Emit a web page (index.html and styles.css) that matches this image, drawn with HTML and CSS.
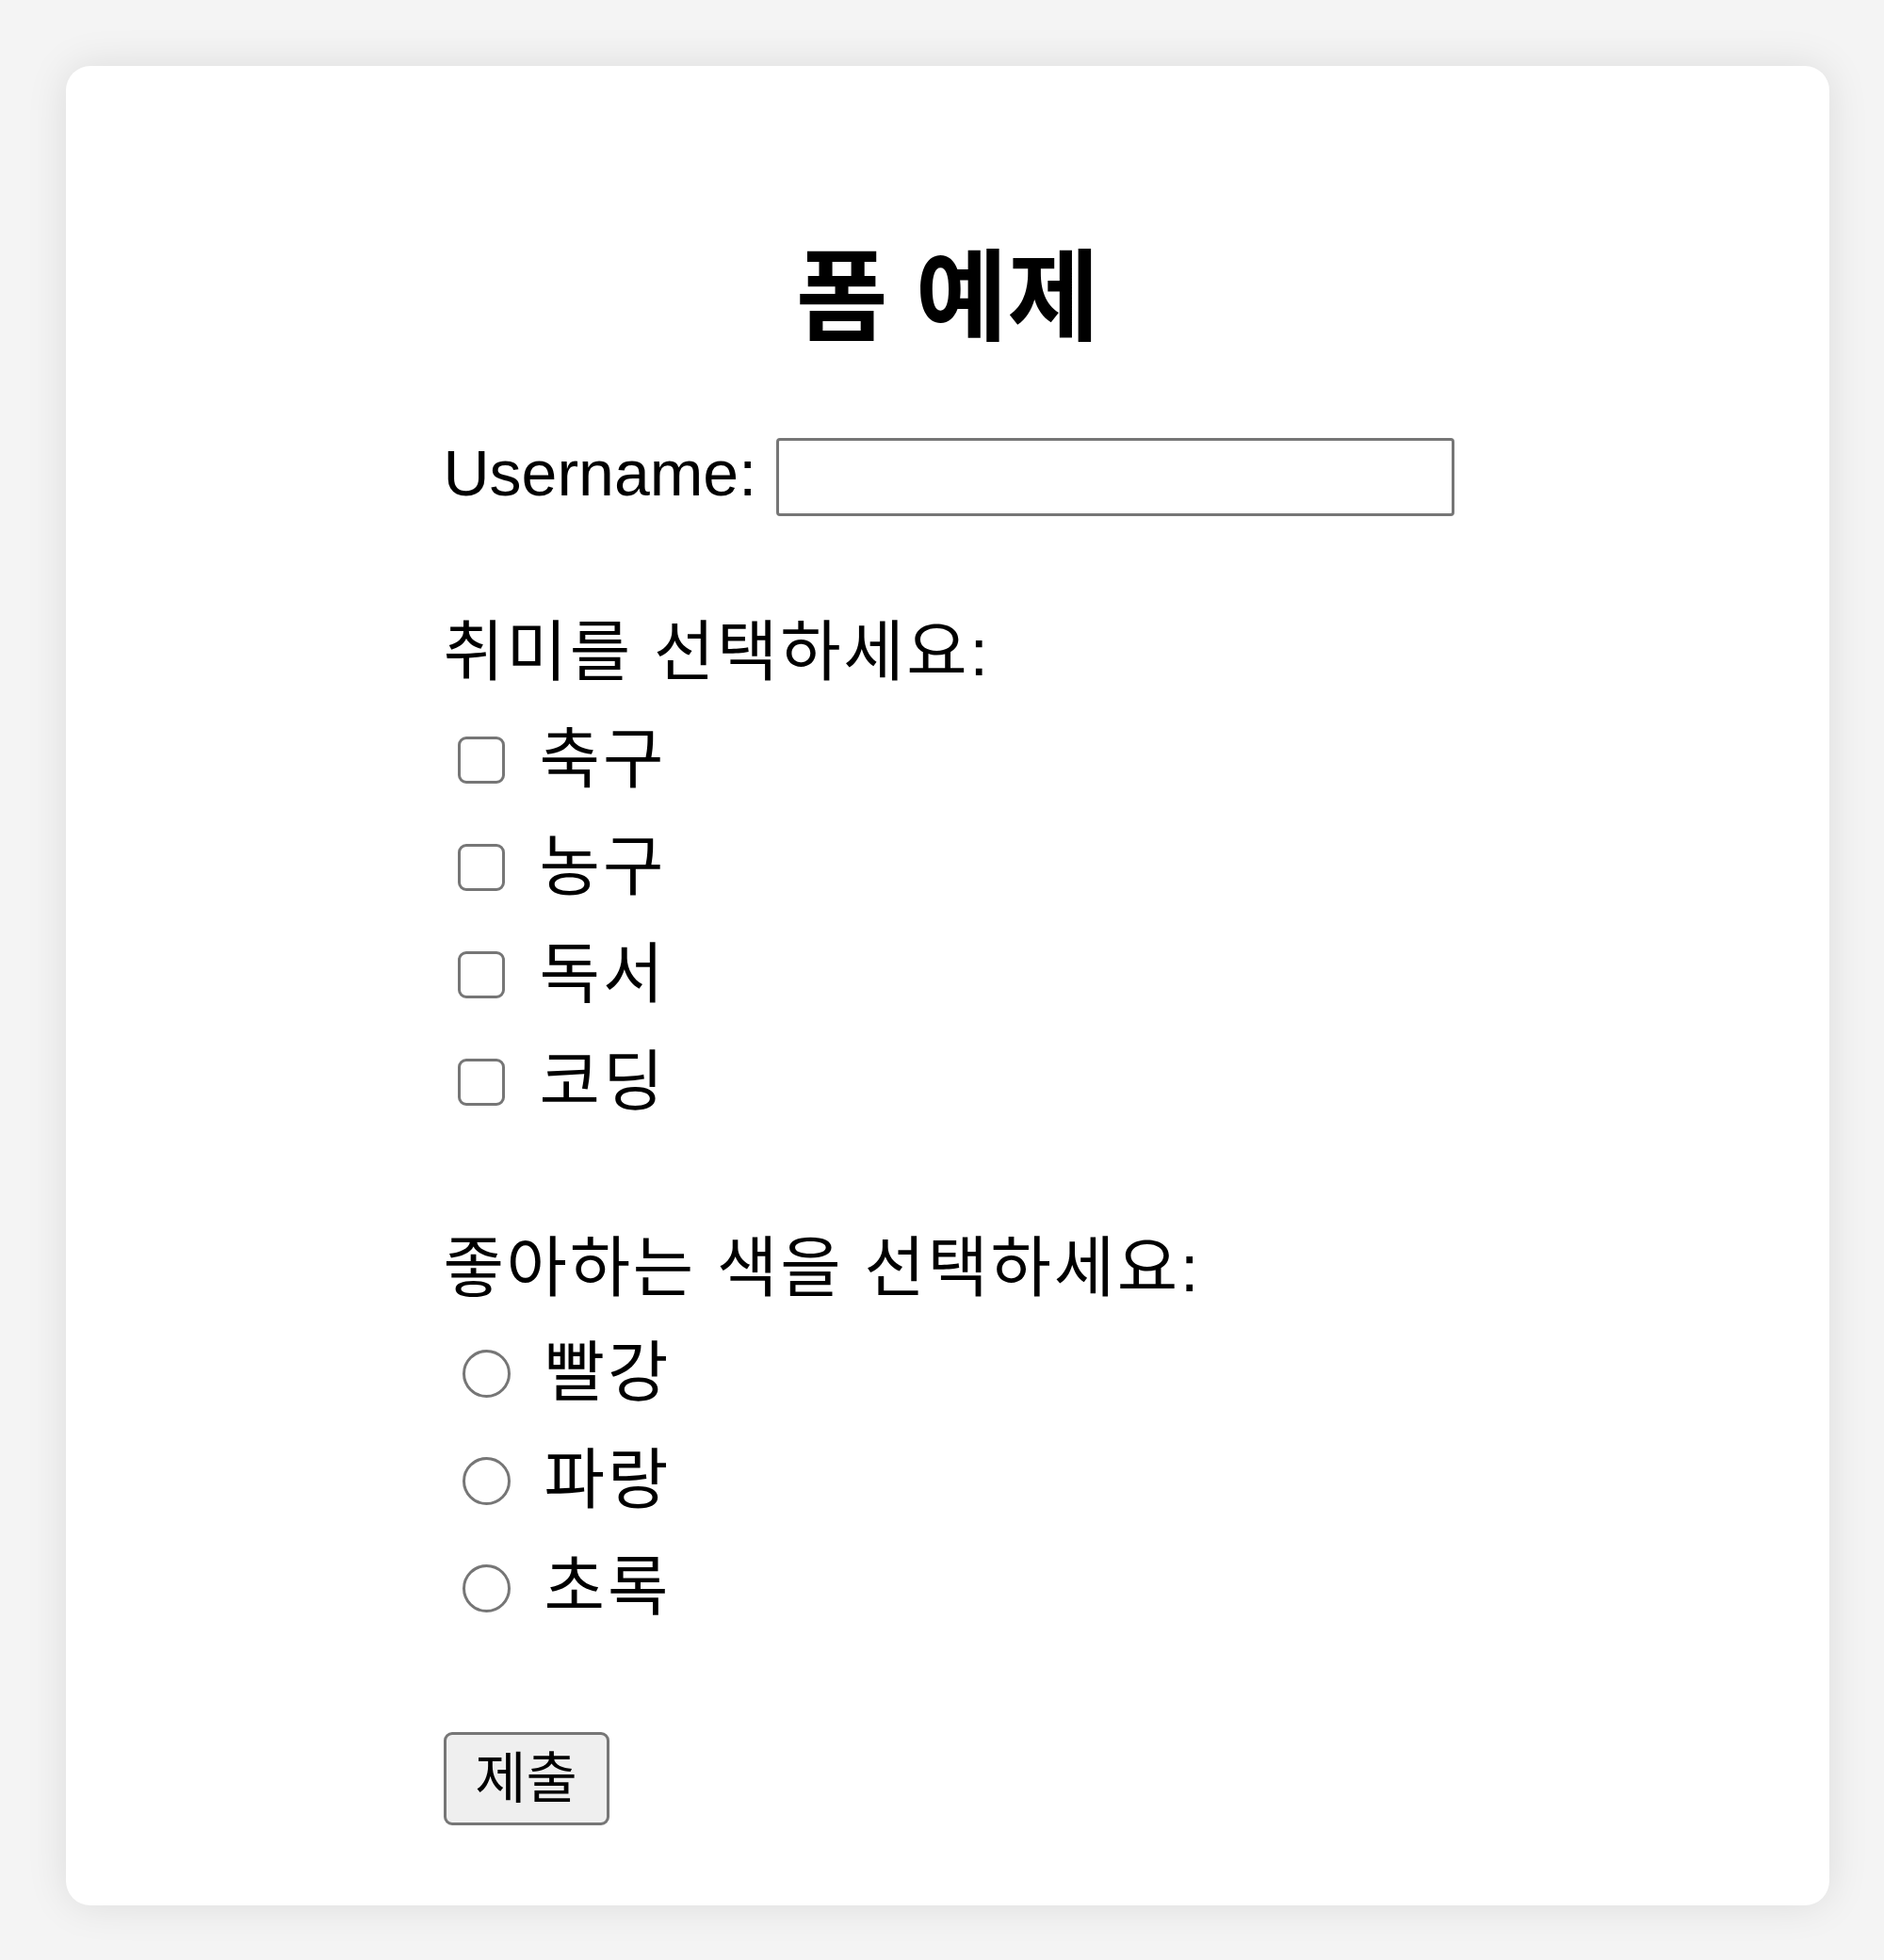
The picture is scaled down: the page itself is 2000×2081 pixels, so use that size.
FILE: index.html
```html
<!DOCTYPE html>
<html lang="ko">
<head>
<meta charset="utf-8">
<title>폼 예제</title>
<link rel="stylesheet" href="styles.css">
</head>
<body>
<div class="card">
  <h2 class="title">폼 예제</h2>
  <form class="form">
    <div class="field-row">
      <label class="field-label" for="username">Username:</label>
      <input class="text-input" type="text" id="username" name="username">
    </div>

    <div class="group group-hobby">
      <div class="group-label">취미를 선택하세요:</div>
      <div class="option"><input class="check" type="checkbox" id="h1"><label class="option-label" for="h1">축구</label></div>
      <div class="option"><input class="check" type="checkbox" id="h2"><label class="option-label" for="h2">농구</label></div>
      <div class="option"><input class="check" type="checkbox" id="h3"><label class="option-label" for="h3">독서</label></div>
      <div class="option"><input class="check" type="checkbox" id="h4"><label class="option-label" for="h4">코딩</label></div>
    </div>

    <div class="group group-color">
      <div class="group-label">좋아하는 색을 선택하세요:</div>
      <div class="option"><input class="radio" type="radio" name="color" id="c1"><label class="option-label" for="c1">빨강</label></div>
      <div class="option"><input class="radio" type="radio" name="color" id="c2"><label class="option-label" for="c2">파랑</label></div>
      <div class="option"><input class="radio" type="radio" name="color" id="c3"><label class="option-label" for="c3">초록</label></div>
    </div>

    <button class="submit" type="submit">제출</button>
  </form>
</div>
</body>
</html>
```

FILE: styles.css
```css
* {
  box-sizing: border-box;
}

html, body {
  margin: 0;
  padding: 0;
}

body {
  background: #f4f4f4;
  padding: 70px 58px 58px 70px;
  font-family: "Liberation Sans", "Noto Sans CJK KR", Arial, sans-serif;
  font-size: 70px;
  color: #000;
}

.card {
  background: #ffffff;
  border-radius: 26px;
  box-shadow: 0 0 44px rgba(0, 0, 0, 0.1);
  padding: 176px 0 86px 0;
  height: 1953px;
}

.title {
  margin: 0;
  font-size: 106px;
  font-weight: bold;
  line-height: 140px;
  text-align: center;
}

.form {
  width: 1071px;
  margin: 0 auto;
}

.field-row {
  display: flex;
  align-items: center;
  height: 83px;
  margin-top: 79px;
}

.field-label {
  font-size: 68px;
  line-height: 83px;
  padding-bottom: 8px;
}

.text-input {
  width: 720px;
  height: 83px;
  margin: 0 0 0 21px;
  border: 3px solid #767676;
  border-radius: 4px;
  background: #fff;
  font-size: 58px;
  font-family: inherit;
  padding: 2px 4px;
}

.group-hobby {
  margin-top: 100px;
}

.group-color {
  margin-top: 96px;
}

.group-label {
  line-height: 90px;
  height: 90px;
  letter-spacing: 2.7px;
}

.group-hobby .group-label {
  margin-bottom: 12px;
}

.group-color .group-label {
  margin-bottom: 9px;
}

.option {
  display: flex;
  align-items: center;
  height: 114px;
  line-height: 90px;
}

.option-label {
  letter-spacing: 3px;
}

.check {
  appearance: none;
  -webkit-appearance: none;
  width: 50px;
  height: 50px;
  margin: 0 0 0 15px;
  border: 3px solid #767676;
  border-radius: 9px;
  background: #fff;
  flex: none;
}

.radio {
  appearance: none;
  -webkit-appearance: none;
  width: 51px;
  height: 51px;
  margin: 0 0 0 20px;
  border: 3px solid #767676;
  border-radius: 50%;
  background: #fff;
  flex: none;
}

.check + .option-label {
  margin-left: 37px;
}

.radio + .option-label {
  margin-left: 36px;
}

.submit {
  display: block;
  margin-top: 96px;
  width: 176px;
  height: 99px;
  padding: 0;
  border: 3px solid #767676;
  border-radius: 9px;
  background: #efefef;
  color: #000;
  font-family: "Liberation Sans", "Noto Sans CJK KR", Arial, sans-serif;
  font-size: 59px;
  line-height: 90px;
}
```
